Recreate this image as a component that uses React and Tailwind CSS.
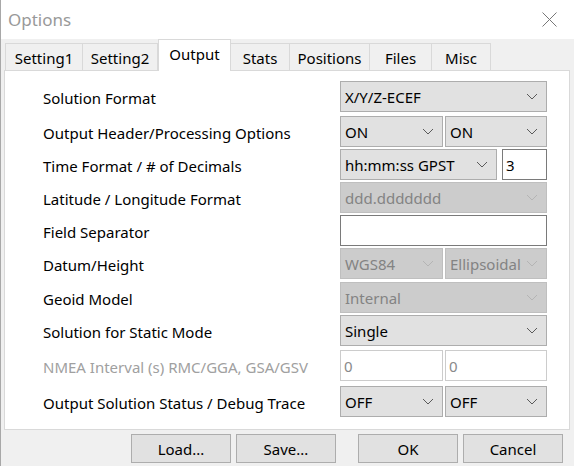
import React from "react";

const font = { fontFamily: '"Noto Sans", "Liberation Sans", sans-serif' };

function Chevron({ disabled }) {
  return (
    <svg width="12" height="7" viewBox="0 0 12 7" className="shrink-0">
      <path d="M1 1 L6 6 L11 1" fill="none" stroke={disabled ? "#b4b4b4" : "#5a5a5a"} strokeWidth="1" />
    </svg>
  );
}

function Combo({ value, disabled, className = "" }) {
  return (
    <div
      className={
        "h-full flex items-center justify-between pl-[4px] pr-[8px] border overflow-hidden " +
        (disabled ? "bg-[#cccccc] border-[#bfbfbf] text-[#838383] " : "bg-[#e1e1e1] border-[#adadad] text-[#000] ") +
        className
      }
    >
      <span className="whitespace-nowrap leading-[20px]">{value}</span>
      <Chevron disabled={disabled} />
    </div>
  );
}

function Edit({ value, disabled, className = "" }) {
  return (
    <div
      className={
        "h-full flex items-center pl-[3px] border bg-white " +
        (disabled ? "border-[#cccccc] text-[#8a8a8a] " : "border-[#7a7a7a] text-black ") +
        className
      }
    >
      <span className="leading-[20px]">{value}</span>
    </div>
  );
}

function Row({ label, disabledLabel, children, className = "" }) {
  return (
    <div className={"flex h-[31px] items-center " + className}>
      <div className={"w-[297px] pt-[3px] leading-[20px] whitespace-nowrap " + (disabledLabel ? "text-[#a0a0a0]" : "text-black")}>{label}</div>
      <div className="w-[207px] h-full flex gap-[2px]">{children}</div>
    </div>
  );
}

const tabs = [
  { name: "Setting1", w: "w-[78px]" },
  { name: "Setting2", w: "w-[76px]" },
  { name: "Output", w: "w-[73px]", sel: true },
  { name: "Stats", w: "w-[60px]" },
  { name: "Positions", w: "w-[81px]" },
  { name: "Files", w: "w-[63px]" },
  { name: "Misc", w: "w-[60px]" },
];

export default function App() {
  return (
    <div style={font} className="w-[574px] h-[466px] bg-[#f0f0f0] overflow-hidden text-[15px] border-l border-[#a8a8a8] flex flex-col">
      {/* Title bar */}
      <div className="h-[39px] bg-white flex items-center justify-between shrink-0">
        <span className="pl-[7px] text-[17px] text-[#999999] leading-[24px]">Options</span>
        <svg width="15" height="15" viewBox="0 0 15 15" className="mr-[17px]">
          <path d="M0.5 0.5 L14.5 14.5 M14.5 0.5 L0.5 14.5" stroke="#777" strokeWidth="1" fill="none" />
        </svg>
      </div>
      {/* Tabs */}
      <div className="h-[31px] flex items-end pl-[4px] shrink-0">
        {tabs.map((t) =>
          t.sel ? (
            <div
              key={t.name}
              className={t.w + " h-[32px] -mb-[1px] bg-white border border-b-0 border-[#d9d9d9] flex items-center justify-center pb-[3px] z-10 relative leading-[20px]"}
            >
              {t.name}
            </div>
          ) : (
            <div
              key={t.name}
              className={t.w + " h-[27px] bg-[#f0f0f0] border border-b-0 border-[#d9d9d9] -ml-[1px] first:ml-0 flex items-center justify-center pt-[1px] leading-[20px]"}
            >
              {t.name}
            </div>
          )
        )}
      </div>
      {/* Panel */}
      <div className="ml-[3px] w-[566px] h-[360px] bg-white border border-[#d9d9d9] shrink-0 pt-[10px] pl-[38px] flex flex-col gap-[2px]">
        <Row label="Solution Format">
          <Combo value="X/Y/Z-ECEF" className="w-full" />
        </Row>
        <Row label="Output Header/Processing Options" className="mt-[2px]">
          <Combo value="ON" className="w-[103px]" />
          <Combo value="ON" className="flex-1" />
        </Row>
        <Row label="Time Format / # of Decimals">
          <Combo value="hh:mm:ss GPST" className="w-[157px]" />
          <Edit value="3" className="flex-1 ml-[3px]" />
        </Row>
        <Row label="Latitude / Longitude Format">
          <Combo value="ddd.ddddddd" disabled className="w-full" />
        </Row>
        <Row label="Field Separator">
          <Edit value="" className="w-full" />
        </Row>
        <Row label="Datum/Height">
          <Combo value="WGS84" disabled className="w-[103px]" />
          <Combo value="Ellipsoidal" disabled className="flex-1 pr-[4px] gap-[2px]" />
        </Row>
        <Row label="Geoid Model" className="mt-[1px]">
          <Combo value="Internal" disabled className="w-full" />
        </Row>
        <Row label="Solution for Static Mode">
          <Combo value="Single" className="w-full" />
        </Row>
        <Row label="NMEA Interval (s) RMC/GGA, GSA/GSV" disabledLabel className="mt-[2px]">
          <Edit value="0" disabled className="w-[103px]" />
          <Edit value="0" disabled className="flex-1" />
        </Row>
        <Row label="Output Solution Status / Debug Trace" className="mt-[3px]">
          <Combo value="OFF" className="w-[103px]" />
          <Combo value="OFF" className="flex-1" />
        </Row>
      </div>
      {/* Buttons */}
      <div className="flex pt-[4px] pl-[130px] shrink-0">
        <button className="w-[100px] h-[29px] bg-[#e1e1e1] border border-[#adadad] flex items-center justify-center leading-[20px]">Load...</button>
        <button className="w-[100px] h-[29px] ml-[5px] bg-[#e1e1e1] border border-[#adadad] flex items-center justify-center leading-[20px]">Save...</button>
        <button className="w-[100px] h-[29px] ml-[22px] bg-[#e1e1e1] border border-[#adadad] flex items-center justify-center leading-[20px]">OK</button>
        <button className="w-[100px] h-[29px] ml-[5px] bg-[#e1e1e1] border border-[#adadad] flex items-center justify-center leading-[20px]">Cancel</button>
      </div>
    </div>
  );
}
